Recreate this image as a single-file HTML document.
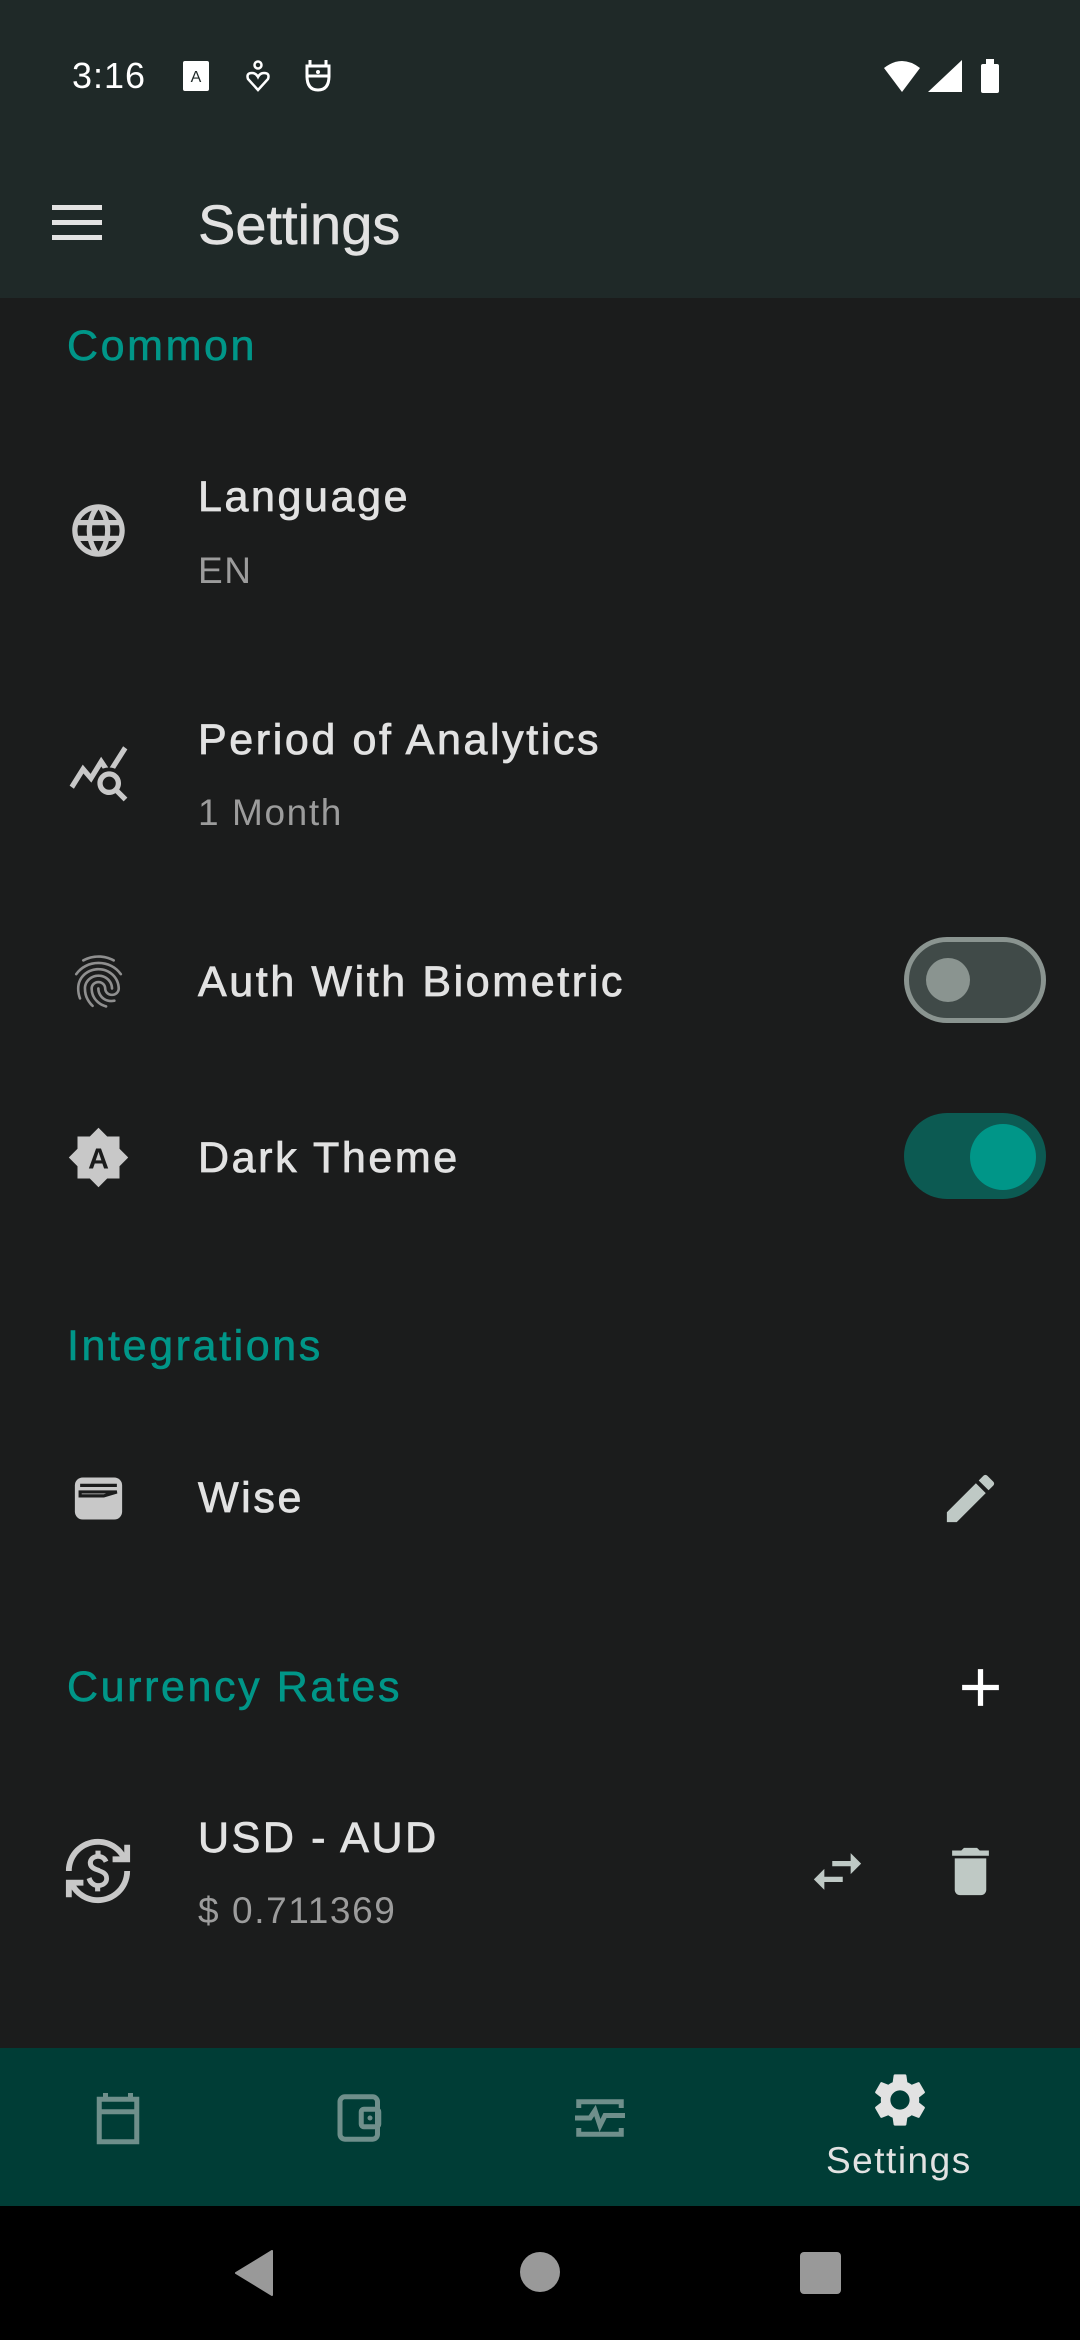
<!DOCTYPE html>
<html><head><meta charset="utf-8"><style>
*{margin:0;padding:0;box-sizing:border-box}
body{width:1080px;height:2340px;background:#1b1c1c;position:relative;overflow:hidden;font-family:"Liberation Sans",sans-serif;color:#e2e2e2}
.a{position:absolute;white-space:nowrap}
.t{font-size:43px;line-height:42px;letter-spacing:2.6px;-webkit-text-stroke:0.8px #e2e2e2}
.s{font-size:37px;line-height:37px;color:#9c9c9c;letter-spacing:1.6px}
.h{font-size:43px;line-height:42px;color:#009688;letter-spacing:2.6px;-webkit-text-stroke:0.6px #009688}
svg{position:absolute}
</style></head><body>
<div class="a" style="left:0;top:0;width:1080px;height:298px;background:#1f2928"></div>
<div class="a" style="left:72px;top:58px;font-size:36px;line-height:36px;color:#fff;letter-spacing:1px">3:16</div>
<svg style="left:182px;top:60px" width="30" height="32" viewBox="0 0 30 32"><rect x="1" y="1" width="26" height="30" rx="2" fill="#fff"/><text x="14" y="22" font-size="16" text-anchor="middle" fill="#1f2928" font-family="Liberation Sans">A</text></svg>
<svg style="left:244px;top:60px" width="28" height="32" viewBox="0 0 28 32"><circle cx="14" cy="5" r="3.5" fill="none" stroke="#fff" stroke-width="2.5"/><path d="M14 30 L4 19 Q2 13 8 13 Q12 13 14 17 Q16 13 20 13 Q26 13 24 19 Z" fill="none" stroke="#fff" stroke-width="2.5"/></svg>
<svg style="left:302px;top:58px" width="32" height="36" viewBox="0 0 32 36"><path d="M8 2v5M24 2v5M5 8h22v10H5zM5 18q0 14 11 14t11-14" fill="none" stroke="#fff" stroke-width="3"/><circle cx="16" cy="14" r="2" fill="#fff"/></svg>
<svg style="left:880px;top:58px" width="124" height="36" viewBox="0 0 124 36"><path d="M4 10 Q22 -4 40 10 L22 34 Z" fill="#fff"/><path d="M48 34 L82 34 L82 2 Z" fill="#fff"/><rect x="101" y="6" width="18" height="29" rx="2" fill="#fff"/><rect x="106" y="1" width="8" height="6" fill="#fff"/></svg>
<svg style="left:52px;top:205px" width="50" height="36" viewBox="0 0 50 36"><rect y="0" width="50" height="5" fill="#e2e2e2"/><rect y="15" width="50" height="5" fill="#e2e2e2"/><rect y="30" width="50" height="5" fill="#e2e2e2"/></svg>
<div class="a" style="left:198px;top:195px;font-size:56px;line-height:60px;color:#e2e2e2;-webkit-text-stroke:0.5px #e2e2e2">Settings</div>

<div class="a h" style="left:67px;top:325px">Common</div>

<svg style="left:67px;top:499px" width="63" height="63" viewBox="0 0 24 24"><path fill="#c8c8c8" d="M11.99 2C6.470 2 2 6.48 2 12s4.47 10 9.99 10C17.52 22 22 17.52 22 12S17.52 2 11.99 2zm6.93 6h-2.95a15.65 15.65 0 0 0-1.38-3.560A8.030 8.030 0 0 1 18.92 8zM12 4.04c.83 1.2 1.48 2.53 1.91 3.96h-3.82c.43-1.430 1.08-2.76 1.91-3.96zM4.26 14C4.1 13.36 4 12.69 4 12s.1-1.36.26-2h3.38c-.08.66-.14 1.32-.14 2s.06 1.34.14 2H4.26zm.82 2h2.95c.32 1.25.78 2.45 1.38 3.56A7.987 7.987 0 0 1 5.08 16zm2.95-8H5.08a7.987 7.987 0 0 1 4.33-3.56A15.65 15.65 0 0 0 8.03 8zM12 19.96c-.83-1.2-1.48-2.53-1.91-3.96h3.82c-.43 1.43-1.08 2.76-1.91 3.96zM14.34 14H9.66c-.09-.66-.16-1.32-.16-2s.07-1.35.16-2h4.68c.09.65.16 1.32.16 2s-.07 1.34-.16 2zm.25 5.56c.6-1.11 1.06-2.31 1.38-3.56h2.95a8.03 8.03 0 0 1-4.33 3.56zM16.36 14c.08-.66.14-1.32.14-2s-.06-1.34-.14-2h3.38c.16.64.26 1.31.26 2s-.1 1.36-.26 2h-3.38z"/></svg>
<div class="a t" style="left:198px;top:476px">Language</div>
<div class="a s" style="left:198px;top:552px">EN</div>

<svg style="left:67px;top:741px" width="63" height="63" viewBox="0 0 24 24"><path fill="#c8c8c8" d="M19.88 18.47c.44-.7.7-1.51.7-2.39 0-2.49-2.01-4.5-4.5-4.5s-4.5 2.01-4.5 4.5 2.01 4.5 4.49 4.5c.88 0 1.7-.26 2.39-.7L21.58 23 23 21.58l-3.12-3.11zm-3.8.11a2.5 2.5 0 0 1 0-5 2.5 2.5 0 0 1 0 5zm-.36-8.5c-.74.02-1.45.18-2.1.45l-.55-.83-3.8 6.18-3.01-3.52-3.63 5.81L1 17l5-8 3 3.5L13 6l2.72 4.08zm2.59.5c-.64-.28-1.33-.45-2.050-.49L21.38 2 23 3.18l-4.69 7.4z"/></svg>
<div class="a t" style="left:198px;top:719px">Period of Analytics</div>
<div class="a s" style="left:198px;top:794px">1 Month</div>

<svg style="left:67px;top:950px" width="63" height="63" viewBox="0 0 24 24"><path fill="#8f8f8f" d="M17.81 4.47c-.08 0-.16-.02-.23-.06C15.66 3.42 14 3 12.01 3c-1.98 0-3.86.47-5.57 1.41-.24.13-.54.04-.68-.2a.506.506 0 0 1 .2-.68C7.82 2.52 9.86 2 12.01 2c2.13 0 3.99.47 6.03 1.52.25.13.34.43.21.67a.49.49 0 0 1-.44.28zM3.5 9.72a.499.499 0 0 1-.41-.79c.99-1.4 2.25-2.5 3.75-3.27C9.98 4.04 14 4.03 17.15 5.65c1.5.77 2.76 1.86 3.75 3.25a.5.5 0 0 1-.12.7c-.23.16-.54.11-.7-.12a9.388 9.388 0 0 0-3.39-2.94c-2.87-1.47-6.54-1.47-9.4.01-1.36.7-2.5 1.7-3.4 2.96-.08.14-.23.21-.39.21zm6.25 12.07a.47.47 0 0 1-.35-.15c-.87-.87-1.34-1.43-2.01-2.64-.69-1.23-1.05-2.73-1.05-4.34 0-2.97 2.540-5.39 5.66-5.39s5.66 2.42 5.66 5.39c0 .28-.22.5-.5.5s-.5-.22-.5-.5c0-2.42-2.09-4.39-4.66-4.39-2.57 0-4.66 1.97-4.66 4.39 0 1.44.32 2.77.93 3.85.64 1.15 1.08 1.64 1.85 2.42.19.2.19.51 0 .71-.11.1-.24.15-.37.15zm7.17-1.85c-1.19 0-2.24-.3-3.1-.89-1.49-1.01-2.38-2.65-2.38-4.39 0-.28.22-.5.5-.5s.5.22.5.5c0 1.41.72 2.74 1.94 3.56.71.48 1.54.71 2.54.71.24 0 .64-.03 1.04-.1.27-.05.53.13.58.41.05.27-.13.53-.41.58-.57.11-1.07.12-1.21.12zM14.91 22c-.04 0-.09-.01-.13-.02-1.59-.44-2.63-1.03-3.72-2.1a7.297 7.297 0 0 1-2.17-5.22c0-1.62 1.38-2.94 3.08-2.94 1.7 0 3.08 1.32 3.08 2.94 0 1.07.93 1.94 2.08 1.94s2.08-.87 2.08-1.94c0-3.77-3.25-6.83-7.25-6.83-2.84 0-5.44 1.58-6.61 4.03-.39.81-.59 1.76-.59 2.8 0 .78.07 2.01.67 3.61.1.26-.03.55-.29.64-.26.1-.55-.04-.64-.29a11.14 11.14 0 0 1-.73-3.96c0-1.2.23-2.29.68-3.24 1.33-2.79 4.28-4.6 7.51-4.6 4.55 0 8.25 3.51 8.25 7.83 0 1.62-1.38 2.94-3.08 2.94s-3.08-1.32-3.08-2.94c0-1.07-.93-1.94-2.08-1.94s-2.08.87-2.08 1.940c0 1.71.66 3.31 1.87 4.51.95.94 1.86 1.46 3.27 1.85.27.07.42.35.35.61-.05.23-.26.38-.47.38z"/></svg>
<div class="a t" style="left:198px;top:961px">Auth With Biometric</div>
<div class="a" style="left:904px;top:937px;width:142px;height:86px;border-radius:43px;background:#404a48;border:5px solid #8a9490"></div>
<div class="a" style="left:926px;top:958px;width:44px;height:44px;border-radius:50%;background:#8a9490"></div>

<svg style="left:67px;top:1126px" width="63" height="63" viewBox="0 0 24 24"><path fill="#c8c8c8" d="M20 8.69V4h-4.69L12 .69 8.69 4H4v4.69L.69 12 4 15.31V20h4.690L12 23.31 15.31 20H20v-4.69L23.31 12 20 8.69z"/><text x="12" y="16.2" font-size="11" text-anchor="middle" fill="#1b1c1c" font-family="Liberation Sans" font-weight="bold">A</text></svg>
<div class="a t" style="left:198px;top:1137px">Dark Theme</div>
<div class="a" style="left:904px;top:1113px;width:142px;height:86px;border-radius:43px;background:#0c5a52"></div>
<div class="a" style="left:970px;top:1124px;width:66px;height:66px;border-radius:50%;background:#009688"></div>

<div class="a h" style="left:67px;top:1325px">Integrations</div>

<svg style="left:67px;top:1467px" width="63" height="63" viewBox="0 0 24 24"><rect x="3" y="4" width="18" height="16" rx="3" fill="#c8c8c8"/><path d="M5 7h14M5 9.5h14l-5 1.5-9 0z" stroke="#1b1c1c" stroke-width="1.2" fill="none"/></svg>
<div class="a t" style="left:198px;top:1477px">Wise</div>
<svg style="left:939px;top:1467px" width="63" height="63" viewBox="0 0 24 24"><path fill="#bfc9c5" d="M3 17.25V21h3.75L17.81 9.94l-3.75-3.75L3 17.25zM20.71 7.04a.996.996 0 0 0 0-1.41l-2.34-2.34a.996.996 0 0 0-1.41 0l-1.83 1.83 3.75 3.75 1.83-1.83z"/></svg>

<div class="a h" style="left:67px;top:1666px">Currency Rates</div>
<svg style="left:949px;top:1656px" width="63" height="63" viewBox="0 0 24 24"><path fill="#fff" d="M19 13h-6v6h-2v-6H5v-2h6V5h2v6h6v2z"/></svg>

<svg style="left:63px;top:1836px" width="70" height="70" viewBox="0 0 24 24"><path fill="#c8c8c8" d="M12.89 11.1c-1.78-.59-2.64-.96-2.64-1.9 0-1.02 1.11-1.39 1.81-1.39 1.31 0 1.79.99 1.9 1.34l1.58-.67c-.15-.44-.82-1.91-2.66-2.23V5h-1.75v1.26c-2.6.56-2.62 2.85-2.62 2.96 0 2.27 2.25 2.91 3.35 3.31 1.58.56 2.28 1.07 2.28 2.03 0 1.13-1.05 1.61-1.98 1.61-1.82 0-2.34-1.87-2.4-2.09l-1.66.67c.63 2.19 2.28 2.78 2.9 2.96V19h1.75v-1.24c.52-.09 3.02-.59 3.02-3.22.01-1.39-.6-2.61-3.28-3.44zM3 21H1v-6h6v2H4.52c1.61 2.41 4.36 4 7.48 4 4.97 0 9-4.03 9-9h2c0 6.08-4.92 11-11 11-3.72 0-7.01-1.85-9-4.67V21zm-2-9C1 5.92 5.92 1 12 1c3.72 0 7.01 1.85 9 4.67V3h2v6h-6V7h2.48C17.87 4.59 15.12 3 12 3c-4.97 0-9 4.03-9 9H1z"/></svg>
<div class="a t" style="left:198px;top:1817px">USD - AUD</div>
<div class="a s" style="left:198px;top:1892px">$ 0.711369</div>
<svg style="left:806px;top:1840px" width="63" height="63" viewBox="0 0 24 24"><path fill="#bfc9c5" d="M6.99 11L3 15l3.99 4v-3H14v-2H6.99v-3zM21 9l-3.99-4v3H10v2h7.01v3L21 9z"/></svg>
<svg style="left:939px;top:1840px" width="63" height="63" viewBox="0 0 24 24"><path fill="#bfc9c5" d="M6 19c0 1.1.9 2 2 2h8c1.1 0 2-.9 2-2V7H6v12zM19 4h-3.5l-1-1h-5l-1 1H5v2h14V4z"/></svg>

<div class="a" style="left:0;top:2048px;width:1080px;height:158px;background:#003d36"></div>
<svg style="left:88px;top:2088px" width="60" height="60" viewBox="0 0 24 24"><path d="M7 2v3M17 2v3M4.5 4.5h15v17h-15zM4.5 9.5h15" fill="none" stroke="#6f8f8b" stroke-width="2"/></svg>
<svg style="left:330px;top:2088px" width="60" height="60" viewBox="0 0 24 24"><rect x="4" y="3.5" width="15" height="17" rx="2" fill="none" stroke="#6f8f8b" stroke-width="2"/><rect x="12.5" y="8.5" width="7" height="7" rx="1" fill="none" stroke="#6f8f8b" stroke-width="2"/><circle cx="16" cy="12" r="1" fill="#6f8f8b"/></svg>
<svg style="left:570px;top:2088px" width="60" height="60" viewBox="0 0 24 24"><path d="M3.5 8V5.5h17V8M3.5 16v2.5h17V16M2 12h6l2-3 2 6 2-4h8" fill="none" stroke="#6f8f8b" stroke-width="2"/></svg>
<svg style="left:868px;top:2068px" width="64" height="64" viewBox="0 0 24 24"><path fill="#e2e2e2" d="M19.14 12.94c.04-.3.06-.61.06-.94 0-.32-.02-.64-.07-.94l2.03-1.58a.49.49 0 0 0 .12-.61l-1.92-3.32a.488.488 0 0 0-.59-.22l-2.39.96c-.5-.38-1.03-.7-1.62-.94l-.36-2.54a.484.484 0 0 0-.48-.41h-3.84c-.24 0-.43.17-.47.41l-.36 2.54c-.59.24-1.13.57-1.62.94l-2.39-.96c-.22-.08-.47 0-.59.22L2.74 8.87c-.12.21-.08.47.12.61l2.03 1.58c-.05.3-.09.63-.09.94s.02.64.07.94l-2.03 1.58a.49.49 0 0 0-.12.61l1.92 3.32c.12.22.37.29.59.22l2.39-.96c.5.38 1.03.7 1.62.94l.36 2.54c.05.24.24.41.48.41h3.84c.24 0 .44-.17.47-.41l.36-2.54c.59-.24 1.13-.56 1.62-.94l2.39.96c.22.08.47 0 .59-.22l1.92-3.32c.12-.22.07-.47-.12-.61l-2.01-1.58zM12 15.6c-1.98 0-3.6-1.62-3.6-3.6s1.62-3.6 3.6-3.6 3.6 1.62 3.6 3.6-1.62 3.6-3.6 3.6z"/></svg>
<div class="a" style="left:826px;top:2141px;font-size:37px;line-height:40px;color:#e2e2e2;letter-spacing:1.5px">Settings</div>

<div class="a" style="left:0;top:2206px;width:1080px;height:134px;background:#000"></div>
<svg style="left:234px;top:2250px" width="40" height="46" viewBox="0 0 40 46"><path d="M38 1 L38 45 L2 23 Z" fill="#999" stroke="#999" stroke-width="2" stroke-linejoin="round"/></svg>
<div class="a" style="left:520px;top:2252px;width:40px;height:40px;border-radius:50%;background:#999"></div>
<div class="a" style="left:800px;top:2252px;width:41px;height:42px;border-radius:4px;background:#999"></div>
</body></html>
